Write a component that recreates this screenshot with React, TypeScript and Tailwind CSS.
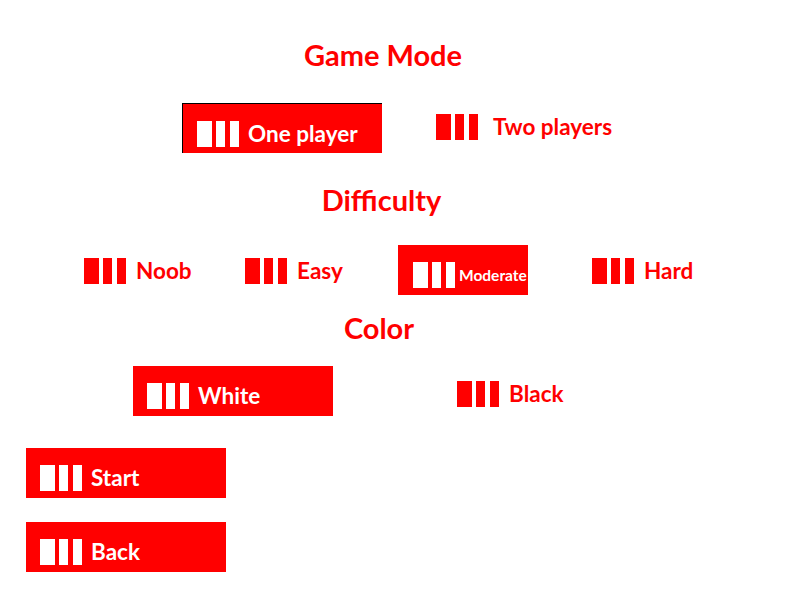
import type { ReactNode } from 'react'

// three-bar glyph used on every menu button
function Bars({ on }: { on: boolean }) {
  const c = on ? 'bg-white' : 'bg-[#ff0000]'
  return (
    <div className="flex h-[26px] shrink-0">
      <div className={`w-[15px] h-full ${c}`} />
      <div className={`w-[9px] h-full ml-[4px] ${c}`} />
      <div className={`w-[9px] h-full ml-[5px] ${c}`} />
    </div>
  )
}

function MenuButton({
  label,
  selected = false,
  className = '',
  textClass = 'text-[22.5px] ml-[9px]',
  padClass = 'pl-[14px]',
}: {
  label: ReactNode
  selected?: boolean
  className?: string
  textClass?: string
  padClass?: string
}) {
  return (
    <div
      className={`h-[50px] shrink-0 ${selected ? 'bg-[#ff0000]' : ''} ${className}`}
    >
      <div className={`flex items-center pt-[17px] ${padClass}`}>
        <Bars on={selected} />
        <span
          className={`font-bold leading-[26px] whitespace-nowrap ${
            selected ? 'text-white' : 'text-[#ff0000]'
          } ${textClass}`}
        >
          {label}
        </span>
      </div>
    </div>
  )
}

function Title({ children, className = '' }: { children: ReactNode; className?: string }) {
  return (
    <h2
      className={`text-center text-[29px] leading-[34px] font-bold text-[#ff0000] ${className}`}
    >
      {children}
    </h2>
  )
}

export default function App() {
  return (
    <div
      className="w-[800px] h-[600px] bg-white overflow-hidden"
      style={{ fontFamily: 'Lato, "Liberation Sans", sans-serif' }}
    >
      <Title className="pt-[38px] pr-[34px]">Game Mode</Title>

      <div className="flex items-start mt-[25px]">
        <MenuButton
          label="One player"
          selected
          className="w-[200px] ml-[182px] mt-[6px] border-l border-t border-black"
        />
        <MenuButton
          label="Two players"
          className="ml-[40px]"
          textClass="text-[22.5px] ml-[15px]"
        />
      </div>

      <Title className="mt-[30px] pr-[37px]">Difficulty</Title>

      <div className="flex items-start mt-[24px]">
        <MenuButton label="Noob" className="w-[161px] ml-[70px]" textClass="text-[22.5px] ml-[10px]" />
        <MenuButton label="Easy" className="w-[167px]" textClass="text-[22.5px] ml-[10px]" />
        <MenuButton
          label="Moderate"
          selected
          className="w-[130px] mt-[4px]"
          padClass="pl-[15px]"
          textClass="text-[15.5px] ml-[4px]"
        />
        <MenuButton label="Hard" className="ml-[50px]" textClass="text-[22.5px] ml-[10px]" />
      </div>

      <Title className="mt-[16px] pr-[42px]">Color</Title>

      <div className="flex items-start mt-[19px]">
        <MenuButton label="White" selected className="w-[200px] ml-[133px] mt-[2px]" />
        <MenuButton label="Black" className="ml-[110px]" textClass="text-[22.5px] ml-[10px]" />
      </div>

      <MenuButton label="Start" selected className="w-[200px] ml-[26px] mt-[32px]" />
      <MenuButton label="Back" selected className="w-[200px] ml-[26px] mt-[24px]" />
    </div>
  )
}
